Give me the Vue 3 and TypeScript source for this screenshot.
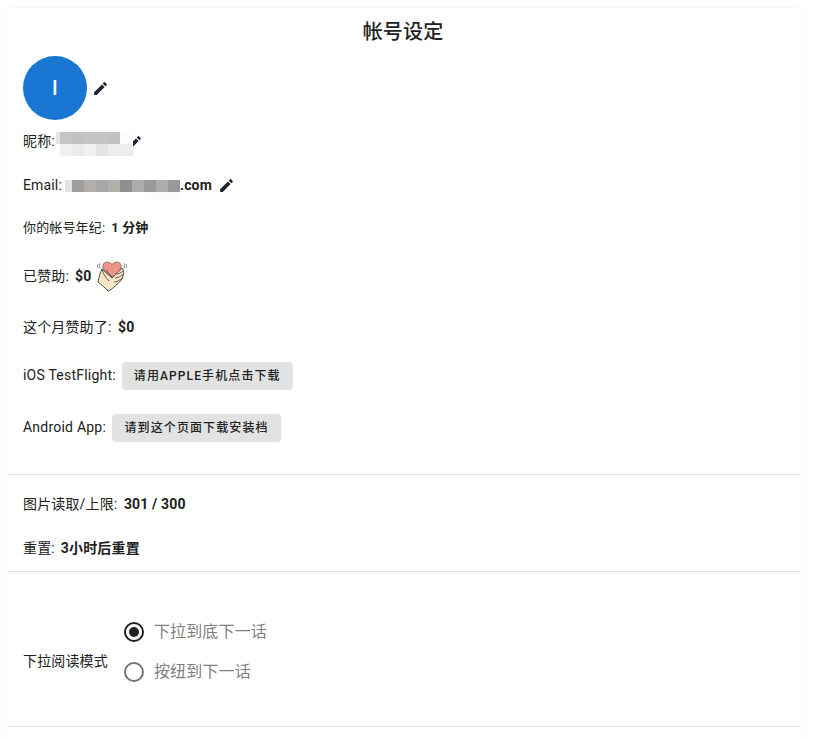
<script setup lang="ts">
interface Cell { w: number; c: string }
const nickTop: Cell[] = [
  { w: 4, c: '#e6e6e6' }, { w: 12, c: '#c6c6c6' }, { w: 12, c: '#c2c2c2' }, { w: 12, c: '#c6c4c2' },
  { w: 12, c: '#c3c4c6' }, { w: 12, c: '#c2c2c2' }, { w: 13, c: '#fcfcfc' },
]
const nickBottom: Cell[] = [
  { w: 4, c: '#ffffff' }, { w: 12, c: '#f0f0f0' }, { w: 12, c: '#ebebeb' }, { w: 12, c: '#f0f0ee' },
  { w: 12, c: '#e3e4e6' }, { w: 12, c: '#ededec' }, { w: 13, c: '#eeeeec' },
]
const mailTop: Cell[] = [
  { w: 7, c: '#e4e3e1' }, { w: 12, c: '#9d9ea0' }, { w: 12, c: '#b2afaa' }, { w: 12, c: '#a6a8a7' },
  { w: 12, c: '#b3afa9' }, { w: 12, c: '#8f8f8f' }, { w: 12, c: '#abacae' }, { w: 12, c: '#9a9a9a' },
  { w: 12, c: '#adaeb0' }, { w: 12, c: '#9a9a9c' },
]
const pencil = 'M3 17.25V21h3.75L17.81 9.94l-3.75-3.75L3 17.25zM20.71 7.04a1 1 0 0 0 0-1.41l-2.34-2.34a1 1 0 0 0-1.41 0l-1.83 1.83 3.75 3.75 1.83-1.83z'
</script>

<template>
  <main class="card">
    <h1 class="title">帐号设定</h1>
    <div class="avatar-row">
      <div class="avatar">I</div>
      <svg class="pencil" viewBox="0 0 24 24"><path :d="pencil" /></svg>
    </div>
    <div class="row nick">
      <span>昵称:</span>
      <span class="pixels nick-pixels">
        <span class="strip">
          <i v-for="(x, n) in nickTop" :key="n" :style="{ width: x.w + 'px', background: x.c }"></i>
        </span>
        <span class="strip">
          <i v-for="(x, n) in nickBottom" :key="n" :style="{ width: x.w + 'px', background: x.c }"></i>
        </span>
      </span>
      <svg class="pencil under" viewBox="0 0 24 24"><path :d="pencil" /></svg>
    </div>
    <div class="row email">
      <span>Email:</span>
      <span class="pixels mail-pixels">
        <span class="strip">
          <i v-for="(x, n) in mailTop" :key="n" :style="{ width: x.w + 'px', background: x.c }"></i>
        </span>
        <span class="mail-fringe"></span>
      </span>
      <b class="com">.com</b>
      <svg class="pencil" viewBox="0 0 24 24"><path :d="pencil" /></svg>
    </div>
    <div class="row age"><span>你的帐号年纪:</span><b>1 分钟</b></div>
    <div class="row paid">
      <span>已赞助:</span><b>$0</b>
      <svg class="heart" viewBox="0 0 30 32">
        <path d="M5 9 C3 13 2 17 1 22 C4 25 9 28 11 31 C14 30 16 28 18 26 C22 23 25 20 26 16 C27 13 27 10 25 8 L15 18 Z" fill="#fbe3c8" stroke="#3a3a3a" stroke-width="0.9" stroke-linejoin="round" />
        <path d="M15 17 C9 13 5 9 6 5 C7 1.500 12 1 15 4.500 C18 1 23 1.500 24 5 C25 9 21 13 15 17 Z" fill="#ee9587" stroke="#6b4a44" stroke-width="0.7" />
        <path d="M15 17 C13 15 11 13 9.500 10 M19 14 C21 14 24 13 26 11 M18 18 C21 18 24 16 26.500 14 M17 22 C20 22 23 20 25.500 18 M5 9 C6 14 9 18 12 21" fill="none" stroke="#3a3a3a" stroke-width="0.8" />
        <path d="M1 4 C0.500 5 0.500 7 1 8 M3 3.500 C2.500 5 2.500 7 3 8.500 M27 3.500 C27.500 5 27.500 7 27 8.500 M29 4 C29.500 5 29.500 7 29 8" fill="none" stroke="#555" stroke-width="0.7" />
      </svg>
    </div>
    <div class="row month"><span>这个月赞助了:</span><b>$0</b></div>
    <div class="row ios">
      <span class="raised">iOS TestFlight:</span>
      <button class="btn btn-ios" type="button">请用APPLE手机点击下载</button>
    </div>
    <div class="row android">
      <span class="raised">Android App:</span>
      <button class="btn" type="button">请到这个页面下载安装档</button>
    </div>
    <hr class="rule first" />
    <div class="row quota"><span>图片读取/上限:</span><b>301 / 300</b></div>
    <div class="row reset"><span>重置:</span><b>3小时后重置</b></div>
    <hr class="rule" />
    <div class="mode">
      <span class="mode-label">下拉阅读模式</span>
      <div class="radios">
        <label class="radio">
          <svg viewBox="0 0 24 24" class="on">
            <circle cx="12" cy="12" r="9" fill="none" stroke="currentColor" stroke-width="2" />
            <circle cx="12" cy="12" r="5" fill="currentColor" />
          </svg>
          <span>下拉到底下一话</span>
        </label>
        <label class="radio">
          <svg viewBox="0 0 24 24" class="off">
            <circle cx="12" cy="12" r="9" fill="none" stroke="currentColor" stroke-width="2" />
          </svg>
          <span>按纽到下一话</span>
        </label>
      </div>
    </div>
    <hr class="rule" />
  </main>
</template>

<style>
html, body { background: #fff; overflow: hidden; }
</style>

<style scoped>
.card {
  box-sizing: border-box;
  width: 800px;
  height: 760px;
  margin: 8px 0 0 4px;
  padding: 0 4px;
  border-radius: 8px;
  background: #fff;
  box-shadow: 0 0 3px rgba(0, 0, 0, 0.07);
  color: #212121;
  font-family: Roboto, "Noto Sans CJK SC", sans-serif;
  font-size: 14px;
  line-height: 20px;
  letter-spacing: 0.15px;
}
.title {
  margin: 0;
  height: 48px;
  padding-right: 2px;
  font-size: 20px;
  font-weight: 500;
  line-height: 48px;
  text-align: center;
}
.avatar-row { display: flex; align-items: center; gap: 5px; padding-left: 15px; }
.avatar {
  width: 64px;
  height: 64px;
  border-radius: 50%;
  background: #1976d2;
  color: #fff;
  font-size: 20px;
  font-weight: 500;
  line-height: 64px;
  text-align: center;
}
.pencil { width: 17px; height: 17px; fill: #1c2530; flex: none; }
.under { margin: 3px 0 0 -8px; }
.row { display: flex; align-items: center; gap: 6px; padding-left: 15px; height: 20px; }
.row b { font-weight: 700; }
.nick { margin-top: 11px; gap: 1px; }
.email { margin-top: 24px; gap: 3px; }
.com { margin-left: -3px; margin-right: 3px; }
.age { margin-top: 23px; font-size: 13px; }
.paid { margin-top: 22px; height: 32px; }
.heart { width: 30px; height: 32px; }
.month { margin-top: 25px; gap: 6.5px; }
.ios { margin-top: 25px; height: 28px; align-items: flex-start; }
.android { margin-top: 24px; height: 28px; align-items: flex-start; }
.raised { line-height: 26px; letter-spacing: 0.22px; }
.btn {
  height: 28px;
  padding: 0 12.5px;
  border: 0;
  border-radius: 4px;
  background: #e2e2e2;
  color: #212121;
  font: 500 12px/28px Roboto, "Noto Sans CJK SC", sans-serif;
  letter-spacing: 1.1px;
}
.btn-ios { padding: 0 12px; }
.pixels { display: inline-flex; flex-direction: column; flex: none; position: relative; z-index: 1; }
.strip { display: flex; }
.strip i { display: block; height: 12px; }
.nick-pixels { margin-top: 6px; }
.mail-pixels { margin-top: 10px; }
.mail-fringe { width: 35px; height: 8px; margin-left: 80px; background: #fbfbfb; }
.rule { border: 0; border-top: 1px solid #e0e0e0; margin: 0; }
.first { margin-top: 32px; }
.quota { margin-top: 19px; gap: 6.5px; }
.reset { margin-top: 24px; margin-bottom: 13px; }
.mode { display: flex; align-items: center; gap: 14px; padding: 48px 0 42px 15px; }
.mode-label { flex: none; margin-top: 18px; }
.radios { display: flex; flex-direction: column; gap: 16px; }
.radio {
  display: flex;
  align-items: center;
  gap: 8px;
  height: 24px;
  color: #808080;
  font-size: 16px;
}
.radio svg { width: 24px; height: 24px; }
.on { color: #212121; }
.off { color: #757575; }
</style>
